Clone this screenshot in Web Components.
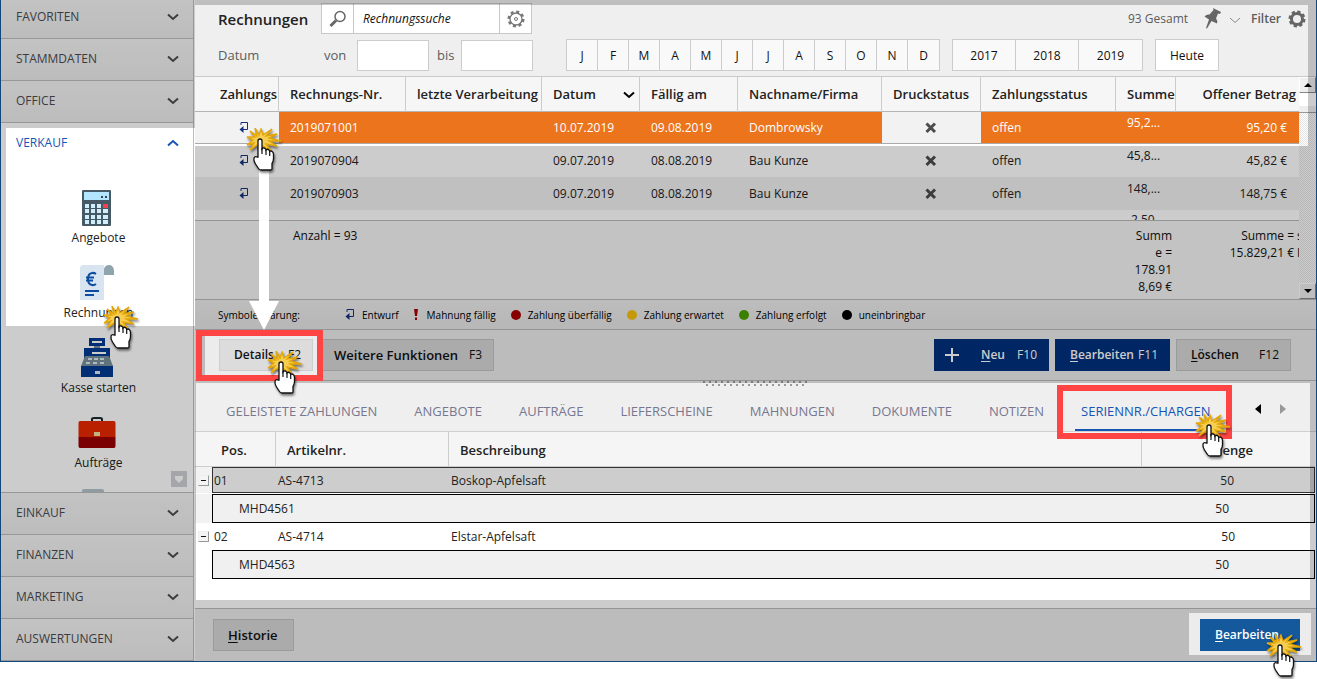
<!DOCTYPE html>
<html lang="de">
<head>
<meta charset="utf-8">
<title>Rechnungen</title>
<style>
html, body { margin: 0; background: #fff; }
body { min-height: 100vh; font: 12px/16px "Open Sans", "Noto Sans", sans-serif; color: #222; }
</style>
</head>
<body>
<erp-app></erp-app>
<script>
function define(name, css, html) {
  customElements.define(name, class extends HTMLElement {
    constructor() {
      super();
      this.attachShadow({ mode: 'open' });
    }
    connectedCallback() {
      if (this.shadowRoot.firstChild) return;
      const markup = typeof html === 'function' ? html(this) : html;
      this.shadowRoot.innerHTML = '<style>*{box-sizing:border-box}button,input{font:inherit;color:inherit;margin:0}' + css + '</style>' + markup;
    }
  });
}

const icons = {
  calc: '<svg width="30" height="36" viewBox="0 0 30 36"><rect x="0" y="0" width="29" height="36" rx="1" fill="#455a64"/><rect x="2" y="2" width="25" height="8" fill="#b3e5fc"/><path d="M19 6h2v2h-2zM23 6h2v2h-2z" fill="#37474f"/><g fill="#cfeffc"><path d="M3 14h4v4H3zM9 14h4v4H9zM15 14h4v4h-4zM3 19h4v4H3zM9 19h4v4H9zM15 19h4v4h-4zM21 19h5v4h-5zM3 25h4v4H3zM9 25h4v4H9zM15 25h4v4h-4zM21 25h5v4h-5zM3 30h4v4H3zM9 30h4v4H9zM15 30h4v4h-4zM21 30h5v4h-5z"/></g><path d="M21 14h5v4h-5z" fill="#f44050"/></svg>',
  invoice: '<svg width="34" height="36" viewBox="0 0 34 36"><path d="M2 0h28q4 1 4 5v4H24v26H0V3q0-2 2-3z" fill="#d9e4f1"/><path d="M24 0h10v10H24z" fill="#fff"/><path d="M24 10V4q1-4 5-4t5 5v5z" fill="#90a4ae"/><path d="M16 9q-2-1.500-4-1-4 .5-4 6t4 6q2 .5 4-1M6 12.500h8M6 15.500h7" fill="none" stroke="#0c4da2" stroke-width="2"/><path d="M5 25h14v2H5zM5 29h9v2H5z" fill="#0c4da2"/></svg>',
  register: '<svg width="34" height="40" viewBox="0 0 34 40"><path d="M9 0h16v8H9z" fill="#023a92"/><path d="M12 3h10v2H12z" fill="#fff"/><path d="M14 8h6v3h-6z" fill="#78909c"/><path d="M4 10h26v10H4z" fill="#023a92"/><path d="M12 14h14v2H12z" fill="#fff"/><path d="M5 18h24l4 10H1z" fill="#78909c"/><g fill="#dfe8ee"><path d="M8 20h4v2H8zM14 20h4v2h-4zM20 20h4v2h-4zM6 24h4v2H6zM13 24h4v2h-4zM20 24h4v2h-4z"/></g><path d="M1 28h32v11H1z" fill="#023a92"/><path d="M15 33h5v3h-5z" fill="#dfe8ee"/></svg>',
  briefcase: '<svg width="38" height="32" viewBox="0 0 38 32"><path d="M14 4V2q0-1 2-1h6q2 0 2 1v2" fill="none" stroke="#1c2a30" stroke-width="2"/><path d="M2 4h34q1.500 0 1.500 2v14H.5V6q0-2 1.500-2z" fill="#e62800"/><path d="M.5 20h37v9q0 2-1.500 2H2q-1.500 0-1.500-2z" fill="#9a0006"/><path d="M16 15h6v4h-6z" fill="#f5dfa8"/></svg>',
  ret: '<svg width="10" height="11" viewBox="0 0 10 11"><path d="M2 3V.5h6.500v7H3" fill="none" stroke="#15307f" stroke-width="1"/><path d="M4.500 4v7L.5 7.500z" fill="#15307f"/></svg>',
  cross: '<svg width="12" height="12" viewBox="0 0 12 12"><path d="M1.500 1.500l8.500 8.500M10 1.500L1.500 10" stroke="#4c4c4c" stroke-width="3"/></svg>',
  search: '<svg width="18" height="18" viewBox="0 0 18 18"><circle cx="11" cy="6.500" r="5" fill="none" stroke="#666" stroke-width="1.500"/><path d="M7 10.500L1.500 16" stroke="#666" stroke-width="3"/></svg>',
  gear: '<svg width="18" height="18" viewBox="0 0 18 18"><circle cx="9" cy="9" r="7.300" fill="none" stroke="#777" stroke-width="2.500" stroke-dasharray="3 2.730"/><circle cx="9" cy="9" r="6" fill="#fff" stroke="#777" stroke-width="1.300"/><circle cx="9" cy="9" r="1.500" fill="none" stroke="#777"/></svg>',
  gearBold: '<svg width="18" height="18" viewBox="0 0 18 18"><circle cx="9" cy="9" r="7" fill="none" stroke="#666" stroke-width="3" stroke-dasharray="3.200 2.300"/><circle cx="9" cy="9" r="5.500" fill="none" stroke="#666" stroke-width="3"/></svg>',
  pin: '<svg width="18" height="21" viewBox="0 0 18 21"><path d="M9 0l8 4-1 2-2-.5-2 5q2 2 1 5L7.500 13 3 20.500 2 20l3-8.500-4.500-3q2-2.500 5-2l4-4.500z" fill="#666"/></svg>',
  chev: '<svg width="12" height="8" viewBox="0 0 12 8"><path d="M1 1.500l5 4.500 5-4.500" fill="none" stroke="currentColor" stroke-width="2"/></svg>',
  thin: '<svg width="10" height="7" viewBox="0 0 10 7"><path d="M0 1l5 4.500L10 1" fill="none" stroke="#888" stroke-width="1"/></svg>',
  plus: '<svg width="14" height="14" viewBox="0 0 14 14"><path d="M7 0v14M0 7h14" stroke="#fff" stroke-width="2"/></svg>',
  bang: '<svg width="4" height="11" viewBox="0 0 4 11"><path d="M0 0h4L3 7H1zM1 8.500h2V11H1z" fill="#a80000"/></svg>'
};
const star = '9,0 13,7 15,1 17,7 26,1 20,8 31,6 23,10 35,13 23,13 31,18 20,16 25,23 17,18 14,20 11,17 4,22 8,15 1,17 7,12 1,9 9,9 4,3 11,8';

define('click-cursor',
  ':host{position:absolute;z-index:3;width:36px;height:44px;pointer-events:none}svg{display:block;filter:drop-shadow(1px 2px 1px rgba(0,0,0,.5))}',
  '<svg width="36" height="44" viewBox="0 0 36 44"><polygon points="' + star + '" fill="#f6cf52" stroke="#e3a606" stroke-width="1.400"/><path d="M12 29V13q0-2 2-2t2 2v8q1.500-2 3-.5 1 .7 1 1.500 1.500-1.500 3 0 .7 .5 .7 1.500 1.300-1 2.500 0 1.300 1 1.300 3v4q0 3-1.500 5V41q0 1-2 1h-9q-1.500 0-2.500-1.500l-3-4.500q-2-3-1.500-6 1-2 3-1z" fill="#fff" stroke="#111" stroke-width="1.300"/><path d="M16 20v6M20 22v5M23.700 24v4" stroke="#111" stroke-width="1.200"/></svg>');

define('mark-frame',
  ':host{position:absolute;z-index:2;border:6px solid #f44;pointer-events:none}', '');

define('down-arrow',
  ':host{position:absolute;z-index:2;pointer-events:none}svg{display:block}',
  '<svg width="30" height="162" viewBox="0 0 30 162"><path d="M10 0h10v133h10L15 162 0 133h10z" fill="#fff"/></svg>');

define('nav-group',
  ':host{display:block;border-bottom:1px solid #bdbdbd;background:linear-gradient(#f4f4f4,#ececec);color:#4c4c50}:host([open]){background:#fff;color:#1755b5}button{display:flex;width:100%;height:41px;border:0;background:none;align-items:center;justify-content:space-between;padding:0 14px 2px 15px}:host([first]) button{height:38px;padding-bottom:5px}:host([open]) svg{transform:scaleY(-1)}',
  el => '<button aria-expanded="' + el.hasAttribute('open') + '"><span>' + el.getAttribute('label') + '</span>' + icons.chev + '</button><slot></slot>');

define('nav-tile',
  ':host{display:block;position:relative;height:75px}a{display:flex;flex-direction:column;align-items:center;justify-content:flex-end;height:75px;color:#222;text-decoration:none}.i{flex:1;display:flex;align-items:center;padding-top:7px}svg{display:block}.t{height:24px;padding-left:3px}',
  el => '<a href="#"><span class="i">' + icons[el.getAttribute('icon')] + '</span><span class="t">' + el.getAttribute('label') + '</span></a><slot></slot>');

define('nav-sidebar',
  ':host{display:block;width:193px;flex:none;border-right:1px solid #bdbdbd}.tiles{height:328px;position:relative;padding-top:15px;overflow:hidden}.more{position:absolute;right:6px;bottom:5px;width:16px;height:16px;border:0;background:#cfd0d4;padding:3px}.more svg{display:block}.peek{width:22px;height:3px;background:#b4c4ca;border-radius:2px 2px 0 0;position:absolute;left:81px;bottom:0}click-cursor{left:102px;top:52px}',
  '<nav><nav-group first label="FAVORITEN"></nav-group><nav-group label="STAMMDATEN"></nav-group><nav-group label="OFFICE"></nav-group><nav-group open label="VERKAUF"><div class="tiles"><nav-tile icon="calc" label="Angebote"></nav-tile><nav-tile icon="invoice" label="Rechnungen"><click-cursor></click-cursor></nav-tile><nav-tile icon="register" label="Kasse starten"></nav-tile><nav-tile icon="briefcase" label="Aufträge"></nav-tile><span class="peek"></span><button class="more" aria-label="Mehr"><svg width="10" height="10"><path d="M1 2h8v3L5 9 1 5z" fill="#fff"/></svg></button></div></nav-group><nav-group label="EINKAUF"></nav-group><nav-group label="FINANZEN"></nav-group><nav-group label="MARKETING"></nav-group><nav-group label="AUSWERTUNGEN"></nav-group></nav>');

define('invoice-search',
  ':host{display:flex;flex-direction:column;background:#efefef;height:76px;padding:3px 0 5px 23px;gap:5px;color:#5c5c5c;font-size:13px}.r{display:flex;align-items:center}h1{font:600 15px/22px "Open Sans",sans-serif;color:#222;margin:0;width:103px;white-space:nowrap}.s{display:flex;height:31px;border:1px solid #c8c8c8;background:#fff;width:211px}.s button,.s label{width:31px;display:flex;align-items:center;justify-content:center;border:0;background:none;padding:0;flex:none}.s input{border:solid #c8c8c8;border-width:0 1px;flex:1;width:0;padding:0 9px;font-size:12px;font-style:italic;outline:0;background:#fff}.s input::placeholder{color:#111;opacity:1}.sp{flex:1}.r.a{padding-right:10px}.count{font-size:12px;margin-right:16px}.thin{margin:0 11px 0 8px}.a b{font-weight:600;margin-right:7px;font-size:12px}.d{width:106px}.l{width:33px}.l2{width:24px;margin-left:8px}.b input{width:72px;height:31px;border:1px solid #ccc;background:#fff;padding:0 4px}.g{display:flex;border:1px solid #ccc;height:32px;background:#f9f9f9;color:#111}.g button{border:0;border-right:1px solid #ccc;background:none;padding:1px 0 0;width:31px;font-size:12px}.g button:last-child{border-right:0}.m{margin-left:33px}.y,.h{margin-left:12px}.y button{width:63px}.h button{width:62px;background:#fff}',
  '<div class="r a"><h1>Rechnungen</h1><div class="s"><label for="q" aria-label="Rechnungssuche">' + icons.search + '</label><input id="q" type="text" placeholder="Rechnungssuche"><button aria-label="Sucheinstellungen">' + icons.gear + '</button></div><span class="sp"></span><span class="count">93 Gesamt</span>' + icons.pin + '<span class="thin">' + icons.thin + '</span><b>Filter</b>' + icons.gearBold + '</div><div class="r b"><span class="d">Datum</span><label class="l" for="v">von</label><input id="v" type="text"><label class="l2" for="b">bis</label><input id="b" type="text"><div class="g m">' + [...'JFMAMJJASOND'].map(m => '<button>' + m + '</button>').join('') + '</div><div class="g y"><button>2017</button><button>2018</button><button>2019</button></div><div class="g h"><button>Heute</button></div></div>');

define('scroll-bar',
  ':host{display:flex;flex-direction:column;width:17px;flex:none;background:#f4f4f4}button{height:16px;border:1px solid #fff;border-color:#fff #888 #888 #fff;background:#eee;padding:0;display:flex;align-items:center;justify-content:center}.w{height:13px;background:#fff}.t{height:7px;background:#eee;border-bottom:1px solid #999}.f{flex:1;background:repeating-conic-gradient(#fff 0 25%,#e4e4e4 0 50%) 0 0/2px 2px}.dn svg{transform:scaleY(-1)}',
  '<button aria-label="Nach oben"><svg width="8" height="4"><path d="M4 0l4 4H0z"/></svg></button><div class="w"></div><div class="t"></div><div class="f"></div><button class="dn" aria-label="Nach unten"><svg width="8" height="4"><path d="M4 0l4 4H0z"/></svg></button>');

const row = (cls, v) => '<tr class="' + cls + '"><td class="c">' + icons.ret + (cls === 'sel' ? '<click-cursor></click-cursor>' : '') + '</td><td>' + v[0] + '</td><td></td><td>' + v[1] + '</td><td>' + v[2] + '</td><td>' + v[3] + '</td><td class="x">' + icons.cross + '</td><td>offen</td><td class="su">' + v[4] + '</td><td class="n">' + v[5] + '</td></tr>';

define('invoice-table',
  ':host{display:flex;border:solid #c9c9c9;border-width:1px 0;border-bottom-color:#bababa;height:224px}.w{flex:1;overflow:hidden;background:#f2f2f2;min-width:0}table{width:100%;table-layout:fixed;border-collapse:separate;border-spacing:0}th{height:35px;font-size:13px;font-weight:600;text-align:left;border-right:1px solid #ccc;border-bottom:1px solid #b4b4b4;background:#f6f6f6;padding:0 0 0 11px;white-space:nowrap;overflow:hidden}th:first-child{padding-left:25px}th:last-child{text-align:right;padding:0 3px 0 0;border-right:0}th svg{float:right;margin:5px 4px 0 0;color:#000}td{height:33px;padding:0 0 0 11px;white-space:nowrap;background:#fff}.c{padding-left:44px;position:relative}.c svg,.x svg{display:block}.x{padding-left:43px}.c click-cursor{left:51px;top:16px}.su{padding-bottom:9px}.n{text-align:right;padding:0 12px 0 0}.sel td{height:32px;background:#ec741c;color:#fff;border-bottom:1px solid #aaa}.sel .c,.sel .x{background:#f2f2f2}.alt td{background:#f0f0f0}.cut td{height:11px;padding-top:0;padding-bottom:0;border-bottom:1px solid #bababa}.cut div{height:10px;overflow:hidden;padding:2px 0 0 4px}tfoot td{background:#f4f4f4;height:78px;line-height:17px;vertical-align:top;padding:6px 0 0 14px;color:#111}tfoot .r1{text-align:right;padding:6px 4px 0 0}tfoot .r2{text-align:right;padding:6px 0 0 0}.k{display:inline-block;width:5px;height:17px;overflow:hidden;vertical-align:top;padding-left:3px}',
  '<div class="w"><table><colgroup><col style="width:84px"><col style="width:127px"><col style="width:136px"><col style="width:98px"><col style="width:98px"><col><col style="width:99px"><col style="width:135px"><col style="width:60px"><col style="width:123px"></colgroup><thead><tr><th>Zahlungs</th><th>Rechnungs-Nr.</th><th>letzte Verarbeitung</th><th>' + icons.chev + 'Datum</th><th>Fällig am</th><th>Nachname/Firma</th><th>Druckstatus</th><th>Zahlungsstatus</th><th>Summe</th><th>Offener Betrag</th></tr></thead><tbody>'
  + row('sel', ['2019071001', '10.07.2019', '09.08.2019', 'Dombrowsky', '95,2...', '95,20 €'])
  + row('', ['2019070904', '09.07.2019', '08.08.2019', 'Bau Kunze', '45,8...', '45,82 €'])
  + row('alt', ['2019070903', '09.07.2019', '08.08.2019', 'Bau Kunze', '148,...', '148,75 €'])
  + '<tr class="cut"><td colspan="8"></td><td><div>2,50</div></td><td></td></tr></tbody><tfoot><tr><td></td><td colspan="7">Anzahl = 93</td><td class="r1">Summ<br>e =<br>178.91<br>8,69 €</td><td class="r2">Summe =<span class="k">s</span><br>15.829,21 €<span class="k">I</span></td></tr></tfoot></table></div><scroll-bar></scroll-bar>');

define('status-legend',
  ':host{display:flex;align-items:center;height:30px;padding-left:23px;background:linear-gradient(#ececec,#e6e6e6);border-bottom:1px solid #bababa;font-size:10px;color:#000}.k{width:127px}.i{display:flex;align-items:center;gap:7px;margin-right:15px}.i svg{display:block}.dot{width:10px;height:10px;border-radius:5px}.i.b{gap:9px}',
  '<span class="k">Symbolerklärung:</span><span class="i">' + icons.ret + 'Entwurf</span><span class="i b">' + icons.bang + 'Mahnung fällig</span>'
  + [['#a80000', 'Zahlung überfällig'], ['#f8c010', 'Zahlung erwartet'], ['#4ca000', 'Zahlung erfolgt'], ['#000', 'uneinbringbar']].map(([c, t]) => '<span class="i"><span class="dot" style="background:' + c + '"></span>' + t + '</span>').join(''));

define('action-button',
  ':host{display:block;position:relative;width:115px}button{width:100%;height:32px;display:flex;align-items:center;border:1px solid #c2c2c2;background:#d6d6d6;padding:0 11px 0 14px;text-align:left;white-space:nowrap}b{font-weight:600;flex:1}:host([wide]) b{font-size:13px}u{text-underline-offset:2px}:host([kind=navy]) button{background:#00307c;border-color:#00307c;color:#fff}:host([kind=blue]) button{background:#14599c;border-color:#14599c;color:#fff}:host([kind=light]) button{background:#dcdcdc;border-color:#cfcfcf}svg{margin-right:22px;margin-left:-4px}',
  el => {
    const t = el.getAttribute('label'), k = el.getAttribute('key');
    const label = el.hasAttribute('mnemonic') ? '<u>' + t[0] + '</u>' + t.slice(1) : t;
    return '<button>' + (el.hasAttribute('plus') ? icons.plus : '') + '<b>' + label + '</b>' + (k ? '<span>' + k + '</span>' : '') + '</button><slot></slot>';
  });

define('action-bar',
  ':host{display:flex;align-items:center;gap:6px;height:51px;padding:0 25px 0 24px;background:#ececec;border-bottom:1px solid #bababa;color:#111}.d{width:94px}.w{width:175px}.sp{flex:1}mark-frame{left:-23px;top:-9px;width:127px;height:51px}down-arrow{left:30px;bottom:41px}.d click-cursor{left:48px;top:12px}',
  '<action-button class="d" kind="light" label="Details" key="F2"><mark-frame></mark-frame><down-arrow></down-arrow><click-cursor></click-cursor></action-button><action-button class="w" wide label="Weitere Funktionen" key="F3"></action-button><span class="sp"></span><action-button kind="navy" plus mnemonic label="Neu" key="F10"></action-button><action-button kind="navy" mnemonic label="Bearbeiten" key="F11"></action-button><action-button mnemonic label="Löschen" key="F12"></action-button>');

define('tab-strip',
  ':host{display:flex;position:relative;height:51px;background:#efefef;border-bottom:1px solid #d0d0d0;padding-left:25px;align-items:flex-end}.grip{position:absolute;left:0;right:2px;top:0;margin:0 auto;width:104px;height:6px;background:radial-gradient(circle at 1px 1px,#999 1px,transparent 0) 0 0/6px 6px,radial-gradient(circle at 1px 1px,#999 1px,transparent 0) 3px 3px/6px 6px}button{border:0;background:none;border-bottom:2px solid transparent;height:38px;padding:0 6px;margin-right:25px;color:#77778f;font-size:13px;white-space:nowrap;position:relative}button[aria-selected=true]{color:#1755b5;border-color:#1755b5;margin-right:0}mark-frame{left:-18px;top:-8px;width:175px;height:54px}click-cursor{left:120px;top:21px}.n{margin:0 0 0 38px;height:42px;width:7px;padding:0;flex:none}.n+.n{margin-left:18px}.n svg{display:block}',
  '<div class="grip"></div>' + ['GELEISTETE ZAHLUNGEN', 'ANGEBOTE', 'AUFTRÄGE', 'LIEFERSCHEINE', 'MAHNUNGEN', 'DOKUMENTE', 'NOTIZEN'].map(t => '<button role="tab">' + t + '</button>').join('') + '<button role="tab" aria-selected="true">SERIENNR./CHARGEN<mark-frame></mark-frame><click-cursor></click-cursor></button><button class="n" aria-label="Zurück"><svg width="6" height="10"><path d="M6 0v10L0 5z" fill="#000"/></svg></button><button class="n" aria-label="Weiter"><svg width="6" height="10"><path d="M0 0v10l6-5z" fill="#999"/></svg></button>');

define('detail-table',
  ':host{display:block;background:#fff;height:176px;padding-right:1px}table{width:100%;table-layout:fixed;border-collapse:separate;border-spacing:0}th{height:35px;font-size:13px;font-weight:600;text-align:left;background:#f5f5f5;border-right:1px solid #ccc;border-bottom:1px solid #ccc;padding:2px 0 0 11px}th:first-child{padding-left:26px}th:last-child{border-right:0;text-align:right;padding-right:62px}td{height:27px;padding:0 0 0 2px;color:#222}td.n{text-align:right;padding-right:80px}.e{background:#f2f2f2;padding:0}tr.o .e{background:#fff}.e button{width:11px;height:11px;margin-left:3px;border:1px solid #ccc;border-color:#eee #999 #999 #eee;background:#f4f4f4;padding:0;display:flex;align-items:center;justify-content:center}.e button::before{content:"";width:5px;height:1px;background:#111}.s td:not(.e){background:#cdcdcd;border:solid #333;border-width:1px 0;padding-top:1px}.s td{height:26px}.s td:nth-child(2),.ch td:nth-child(2){border-left-width:1px!important}.s td:nth-child(2){padding-left:1px}.s td:last-child,.ch td:last-child{border-right-width:1px!important}.gap td{height:1px;padding:0}.ch td{height:29px}.ch td:not(.e){border:solid #000;border-width:1px 0;background:#f0f0f0}.ch td:nth-child(2){padding-left:26px}.ch td.n{padding-right:85px}',
  '<table><colgroup><col style="width:17px"><col style="width:64px"><col style="width:173px"><col><col style="width:173px"></colgroup><thead><tr><th colspan="2">Pos.</th><th>Artikelnr.</th><th>Beschreibung</th><th>Menge</th></tr></thead><tbody><tr class="s"><td class="e"><button aria-label="Zuklappen"></button></td><td>01</td><td>AS-4713</td><td>Boskop-Apfelsaft</td><td class="n">50</td></tr><tr class="gap"><td colspan="5"></td></tr><tr class="ch"><td class="e"></td><td colspan="3">MHD4561</td><td class="n">50</td></tr><tr class="o"><td class="e"><button aria-label="Zuklappen"></button></td><td>02</td><td>AS-4714</td><td>Elstar-Apfelsaft</td><td class="n">50</td></tr><tr class="ch o"><td class="e"></td><td colspan="3">MHD4563</td><td class="n">50</td></tr></tbody></table>');

define('app-footer',
  ':host{display:flex;align-items:center;justify-content:space-between;height:53px;border-top:1px solid #bababa;background:#ececec;padding:0 16px 0 18px;color:#111}.h{width:81px}.b{width:100px}.b click-cursor{left:66px;top:15px}',
  '<action-button class="h" wide mnemonic label="Historie"></action-button><action-button class="b" kind="blue" mnemonic label="Bearbeiten"><click-cursor></click-cursor></action-button>');

/* Darkens the window except for the five highlighted regions. */
define('spot-light',
  ':host{position:absolute;inset:0;z-index:1;background:rgba(0,0,0,.2);pointer-events:none;clip-path:polygon(evenodd,0 0,100% 0,100% 100%,0 100%,0 0,'
  + [['6px', '128px', '195px', '326px'], ['195px', '5px', 'calc(100% - 9px)', '146px'], ['205px', '336px', '317px', '376px'], ['196px', '383px', 'calc(100% - 7px)', '600px'], ['calc(100% - 128px)', '613px', 'calc(100% - 6px)', '655px']]
    .map(([l, t, r, b]) => [l + ' ' + t, r + ' ' + t, r + ' ' + b, l + ' ' + b, l + ' ' + t, '0 0'].join(',')).join(',') + ')}', '');

define('erp-app',
  ':host{display:block;position:relative;background:#fff}.win{display:flex;border:solid #14599c;border-width:0 1px 1px}main{flex:1;min-width:0;margin-left:1px}',
  '<div class="win"><nav-sidebar></nav-sidebar><main><invoice-search></invoice-search><invoice-table></invoice-table><status-legend></status-legend><action-bar></action-bar><tab-strip></tab-strip><detail-table></detail-table><app-footer></app-footer></main></div><spot-light></spot-light>');
</script>
</body>
</html>
